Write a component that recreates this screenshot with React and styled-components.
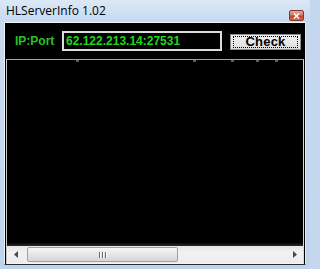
import React from "react";
import styled, { createGlobalStyle } from "styled-components";

const GlobalStyle = createGlobalStyle`
  html, body {
    margin: 0;
    padding: 0;
    background: #c4d7ee;
  }
`;

const Frame = styled.div`
  width: 310px;
  height: 269px;
  box-sizing: border-box;
  padding: 0 4px 4px 4px;
  display: flex;
  flex-direction: column;
  background: linear-gradient(to bottom, #dce8f6 0px, #c6d9ef 22px, #bed3ec 100%);
  font-family: "Liberation Sans", Arial, sans-serif;
`;

const TitleBar = styled.div`
  height: 22px;
  display: flex;
  align-items: flex-start;
  justify-content: space-between;
`;

const Title = styled.span`
  font-family: "Open Sans", "Noto Sans", sans-serif;
  font-size: 12px;
  color: #000;
  padding: 3px 0 0 2px;
  line-height: 16px;
`;

const CloseButton = styled.div`
  width: 15px;
  height: 11px;
  margin: 10px 2px 0 0;
  border: 1px solid #7a3a2e;
  border-radius: 2px;
  box-sizing: border-box;
  background: linear-gradient(to bottom, #e8a593 0%, #d57a62 45%, #c2442a 55%, #d06a4c 100%);
  display: flex;
  align-items: center;
  justify-content: center;
`;

const Client = styled.div`
  flex: 1;
  display: flex;
  flex-direction: column;
  background: #000;
  border: 1px solid;
  border-color: #eef3f9 #e4ebf3 #2a2e33 #eef3f9;
`;

const TopRow = styled.div`
  display: flex;
  align-items: center;
  padding: 8px 0 0 10px;
`;

const Label = styled.span`
  width: 47px;
  font-size: 12px;
  font-weight: bold;
  color: #23c523;
`;

const AddressBox = styled.div`
  width: 160px;
  height: 20px;
  box-sizing: border-box;
  border: 2px solid #dcdcdc;
  padding: 0 0 0 2px;
  display: flex;
  align-items: center;
  font-size: 12px;
  font-weight: bold;
  color: #1ed61e;
  background: #000;
`;

const CheckButton = styled.button`
  margin: 1px 0 0 8px;
  width: 71px;
  height: 16px;
  padding: 1px 2px;
  box-sizing: border-box;
  border: 1px solid #8c8c8c;
  background: linear-gradient(to bottom, #f2f2f2, #dedede);
  display: flex;
  font-family: "Liberation Sans", Arial, sans-serif;
`;

const FocusRect = styled.span`
  flex: 1;
  border: 1px dotted #000;
  display: flex;
  align-items: center;
  justify-content: center;
  font-size: 13px;
  font-weight: bold;
  color: #000;
  line-height: 10px;
  letter-spacing: 0.2px;
`;

const ListBox = styled.div`
  flex: 1;
  margin: 8px 1px 0 1px;
  display: flex;
  flex-direction: column;
  border-top: 1px solid #a5a5a5;
  border-left: 1px solid #c8c8c8;
  border-right: 1px solid #d8d8d8;
  border-bottom: 1px solid #f4f4f4;
`;

const Header = styled.div`
  display: flex;
  height: 2px;
`;

const HeaderCell = styled.div`
  height: 2px;
  box-sizing: border-box;
  border-right: 3px solid #5c5c5c;
`;

const ListBody = styled.div`
  flex: 1;
  background: #000;
`;

const Shade = styled.div`
  height: 3px;
  background: linear-gradient(to bottom, #0a0a0a, #2a2a2a);
`;

const ScrollBar = styled.div`
  height: 17px;
  display: flex;
  align-items: center;
  background: linear-gradient(to bottom, #e6e6e6, #f2f2f2 40%, #ececec);
`;

const ArrowButton = styled.div`
  width: 17px;
  height: 17px;
  display: flex;
  align-items: center;
  justify-content: center;
`;

const Thumb = styled.div`
  width: 151px;
  height: 15px;
  margin-left: 3px;
  box-sizing: border-box;
  border: 1px solid #a2a2a2;
  border-radius: 2px;
  background: linear-gradient(to bottom, #f6f6f6, #e6e6e6 50%, #d6d6d6);
  display: flex;
  align-items: center;
  justify-content: center;
  gap: 2px;
`;

const Grip = styled.span`
  width: 1px;
  height: 6px;
  background: #6a6a6a;
  box-shadow: 1px 0 0 #fff;
`;

const Track = styled.div`
  flex: 1;
`;

const columns = [72, 117, 38, 25, 19];

const Arrow = ({ dir }) => (
  <svg width="4" height="7" viewBox="0 0 4 7">
    {dir === "left" ? (
      <path d="M4 0 L0 3.5 L4 7 Z" fill="#4a4a4a" />
    ) : (
      <path d="M0 0 L4 3.5 L0 7 Z" fill="#4a4a4a" />
    )}
  </svg>
);

const App = () => {
  return (
    <Frame>
      <GlobalStyle />
      <TitleBar>
        <Title>HLServerInfo 1.02</Title>
        <CloseButton>
          <svg width="7" height="6" viewBox="0 0 7 6">
            <path d="M1 0.5 L6 5.5 M6 0.5 L1 5.5" stroke="#fff" strokeWidth="1.6" />
          </svg>
        </CloseButton>
      </TitleBar>
      <Client>
        <TopRow>
          <Label>IP:Port</Label>
          <AddressBox>62.122.213.14:27531</AddressBox>
          <CheckButton>
            <FocusRect>Check</FocusRect>
          </CheckButton>
        </TopRow>
        <ListBox>
          <Header>
            {columns.map((w, i) => (
              <HeaderCell key={i} style={{ width: w }} />
            ))}
          </Header>
          <ListBody />
          <Shade />
          <ScrollBar>
            <ArrowButton>
              <Arrow dir="left" />
            </ArrowButton>
            <Thumb>
              <Grip />
              <Grip />
              <Grip />
            </Thumb>
            <Track />
            <ArrowButton>
              <Arrow dir="right" />
            </ArrowButton>
          </ScrollBar>
        </ListBox>
      </Client>
    </Frame>
  );
};

export default App;
